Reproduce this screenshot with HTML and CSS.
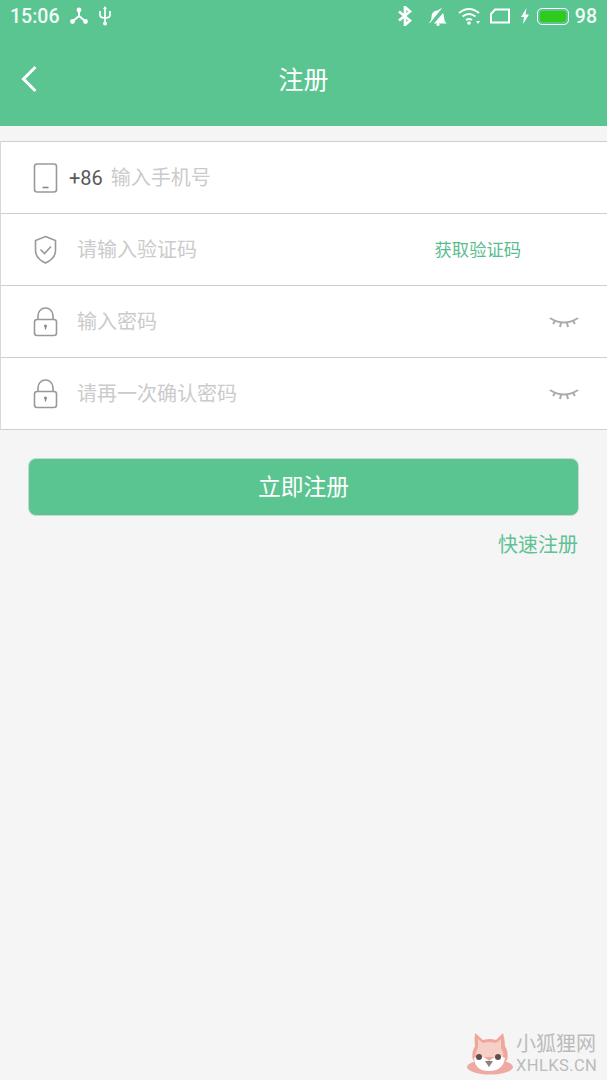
FILE: index.html
```html
<html>
<head>
<title>注册</title>
<link rel="stylesheet" href="styles.css">
</head>
<body>
<header class="top">
	<div class="status">
		<span class="time">15:06</span>
		<svg class="ic-hub" width="20" height="18" viewBox="0 0 20 18"><path d="M10 3v6M10 9L4 14M10 9l6 5" fill="none" stroke="#fff" stroke-width="2"/><circle cx="10" cy="3" r="2.4" fill="#fff"/><circle cx="3.5" cy="14.5" r="2.4" fill="#fff"/><circle cx="16.5" cy="14.5" r="2.4" fill="#fff"/></svg>
		<svg class="ic-usb" width="14" height="20" viewBox="0 0 14 20"><path d="M7 1v18M2 5v4q0 3 5 3q5 0 5-3V5" fill="none" stroke="#fff" stroke-width="1.7"/><path d="M7 0l2 3H5z" fill="#fff"/><circle cx="7" cy="17.5" r="2" fill="#fff"/></svg>
		<span class="spacer"></span>
		<svg class="ic-bt" width="16" height="20" viewBox="0 0 16 20"><path d="M2 5.5l11 9L8 19V1l5 4.500L2 14.500" fill="none" stroke="#fff" stroke-width="2.600"/></svg>
		<svg class="ic-bell" width="20" height="20" viewBox="0 0 20 20"><path d="M1.500 17q3-2 3-6q0-6 6-6.500l5-3-12 15z" fill="#fff"/><path d="M7 17.500L16 7q1 2 1 4.500q0 3 2.500 6z" fill="#fff"/><circle cx="11" cy="18.500" r="1.500" fill="#fff"/></svg>
		<svg class="ic-wifi" width="24" height="20" viewBox="0 0 24 20"><path d="M1 7q10-8 20 0M4.500 10.500q6.500-5 13 0M8 14q3-2 6 0" fill="none" stroke="#fff" stroke-width="2"/><circle cx="11" cy="17" r="1.800" fill="#fff"/><path d="M18 15h4l-2 3z" fill="#fff"/></svg>
		<svg class="ic-tab" width="20" height="16" viewBox="0 0 20 16"><path d="M1 14.500V6l4-4.500h14v13z" fill="none" stroke="#fff" stroke-width="2"/></svg>
		<svg class="ic-bolt" width="10" height="16" viewBox="0 0 10 16"><path d="M6.500 0L1 9h3l-1 7 6-9.500H5.500z" fill="#fff"/></svg>
		<span class="batt"><i></i></span>
		<span class="level">98</span>
	</div>
	<div class="nav">
		<svg class="back" width="18" height="28" viewBox="0 0 18 28"><path d="M15.500 2L3.500 14l12 12" fill="none" stroke="#fff" stroke-width="3"/></svg>
		<h1>注册</h1>
	</div>
</header>

<div class="form">
	<div class="row">
		<svg class="ic" width="26" height="32" viewBox="0 0 26 32"><rect x="1.500" y="2" width="22" height="28" rx="2.500" fill="none" stroke="#999" stroke-width="1.600"/><path d="M9.500 25.500h6" stroke="#888" stroke-width="1.600"/></svg>
		<span class="code">+86</span>
		<span class="ph">输入手机号</span>
	</div>
	<div class="row">
		<svg class="ic" width="26" height="32" viewBox="0 0 26 32"><path d="M12.500 2.500l10 4v10q0 8-10 12.500q-10-4.500-10-12.500v-10z" fill="none" stroke="#999" stroke-width="1.600"/><path d="M7.500 15.500l4 4 6.500-7" fill="none" stroke="#999" stroke-width="1.600"/></svg>
		<span class="ph wide">请输入验证码</span>
		<span class="getcode">获取验证码</span>
	</div>
	<div class="row">
		<svg class="ic" width="26" height="32" viewBox="0 0 26 32"><rect x="1.500" y="13.500" width="22" height="16" rx="2.500" fill="none" stroke="#999" stroke-width="1.600"/><path d="M5 13.500V9.500a7.500 7.500 0 0 1 15 0v4" fill="none" stroke="#999" stroke-width="1.600"/><circle cx="12.500" cy="20" r="1.500" fill="#888"/><path d="M12.500 20v3.500" stroke="#888" stroke-width="1.300"/></svg>
		<span class="ph wide">输入密码</span>
		<svg class="eye" width="30" height="14" viewBox="0 0 30 14"><path d="M1 2q14 9 28 0" fill="none" stroke="#aaa" stroke-width="2"/><path d="M6 5L4 8M12 7l-1 4M18 7l1 4M24 5L26 8" stroke="#aaa" stroke-width="2"/></svg>
	</div>
	<div class="row">
		<svg class="ic" width="26" height="32" viewBox="0 0 26 32"><rect x="1.500" y="13.500" width="22" height="16" rx="2.500" fill="none" stroke="#999" stroke-width="1.600"/><path d="M5 13.500V9.500a7.500 7.500 0 0 1 15 0v4" fill="none" stroke="#999" stroke-width="1.600"/><circle cx="12.500" cy="20" r="1.500" fill="#888"/><path d="M12.500 20v3.500" stroke="#888" stroke-width="1.300"/></svg>
		<span class="ph wide">请再一次确认密码</span>
		<svg class="eye" width="30" height="14" viewBox="0 0 30 14"><path d="M1 2q14 9 28 0" fill="none" stroke="#aaa" stroke-width="2"/><path d="M6 5L4 8M12 7l-1 4M18 7l1 4M24 5L26 8" stroke="#aaa" stroke-width="2"/></svg>
	</div>
</div>

<button class="submit">立即注册</button>
<div class="quick">快速注册</div>

<div class="mark">
	<svg width="50" height="46" viewBox="0 0 50 46">
		<ellipse cx="24" cy="37" rx="23" ry="7.500" fill="#eeaaa2"/>
		<path d="M9 3l8 7q7-2 13 0l7-7q2 7 2 13q4 7 2 14q-8 9-17 9T7 30q-2-7 2-14q-1-7 0-13z" fill="#efa79d"/>
		<path d="M12 9l5 4q7-2 13 0l5-4v9q3 5 2 9H10q-1-4 2-9z" fill="#f6cfc6"/>
		<path d="M8 28q8-4 15 3q8-7 16-3q-2 13-16 13T8 28z" fill="#fff"/>
		<circle cx="13" cy="27" r="3" fill="#5f4f4c"/>
		<circle cx="32" cy="27" r="3" fill="#5f4f4c"/>
		<path d="M19 31h8l-4 6z" fill="#8a8280"/>
	</svg>
	<div class="mark-text">
		<div class="mark-cn">小狐狸网</div>
		<div class="mark-en">XHLKS.CN</div>
	</div>
</div>
</body>
</html>
```
FILE: styles.css
```css
html {
	background: #f5f5f5;
}
body {
	margin: 0;
	height: 1080px;
	overflow: hidden;
	position: relative;
	background: #f5f5f5;
	font-family: "Noto Sans CJK SC", sans-serif;
}
.top {
	display: block;
	height: 126px;
	background: #5bc592;
	color: #fff;
}
.status {
	display: flex;
	align-items: center;
	height: 32px;
	padding: 0 10px;
}
.time, .level {
	font-family: "Roboto", sans-serif;
	font-size: 19.500px;
	font-weight: 500;
	color: #f2fbf6;
}
.ic-hub {
	margin-left: 10px;
}
.ic-usb {
	margin-left: 9px;
}
.spacer {
	flex: 1;
}
.ic-bt {
	margin-right: 14px;
}
.ic-bell {
	margin-right: 11px;
}
.ic-wifi {
	margin-right: 8px;
}
.ic-tab {
	margin-right: 10px;
}
.ic-bolt {
	margin-right: 7px;
}
.batt {
	display: block;
	width: 32px;
	height: 17px;
	padding: 2px;
	margin-right: 6px;
	box-sizing: border-box;
	border: 1.500px solid #fff;
	border-radius: 5px;
}
.batt i {
	display: block;
	height: 100%;
	background: #2ecb1c;
	border-radius: 3px;
}
.nav {
	position: relative;
	height: 94px;
	display: flex;
	align-items: center;
	justify-content: center;
}
.nav h1 {
	margin: 0 0 2px;
	font-size: 25px;
	font-weight: 400;
	line-height: 34px;
}
.back {
	position: absolute;
	left: 20px;
	top: 33px;
}
.form {
	margin-top: 15px;
	border-left: 1px solid #d8d8d8;
	background: #fff;
}
.row {
	height: 71px;
	display: flex;
	align-items: center;
	padding-left: 32px;
	border-top: 1px solid #cfcfcf;
}
.row:last-child {
	border-bottom: 1px solid #cfcfcf;
}
.ic {
	flex: none;
}
.code {
	margin-left: 10px;
	font-family: "Roboto", sans-serif;
	font-size: 20px;
	color: #5a5a5a;
}
.ph {
	margin: -2px 0 0 8px;
	font-size: 20px;
	color: #cbcbcb;
}
.ph.wide {
	margin-left: 18px;
	flex: 1;
}
.getcode {
	margin: -2px 86px 0 0;
	font-size: 17.300px;
	color: #5bbd8f;
}
.eye {
	margin: 2px 28px 0 0;
}
.submit {
	display: block;
	width: 551px;
	height: 58px;
	margin: 28px 0 0 28px;
	padding: 0 0 3px;
	background: #5bc592;
	border: 1px solid #c9d8cf;
	border-radius: 8px;
	color: #fff;
	font-family: "Noto Sans CJK SC", sans-serif;
	font-size: 22.800px;
	font-weight: 400;
}
.quick {
	margin: 13px 29px 0 0;
	text-align: right;
	font-size: 20px;
	line-height: 30px;
	color: #5fc295;
}
.mark {
	position: absolute;
	left: 466px;
	top: 1030px;
	display: flex;
}
.mark-cn {
	font-size: 20px;
	line-height: 26px;
	color: #bbb;
}
.mark-en {
	font-family: "Roboto", sans-serif;
	font-size: 16.500px;
	letter-spacing: 0.400px;
	line-height: 20px;
	color: #bbb;
}
```
